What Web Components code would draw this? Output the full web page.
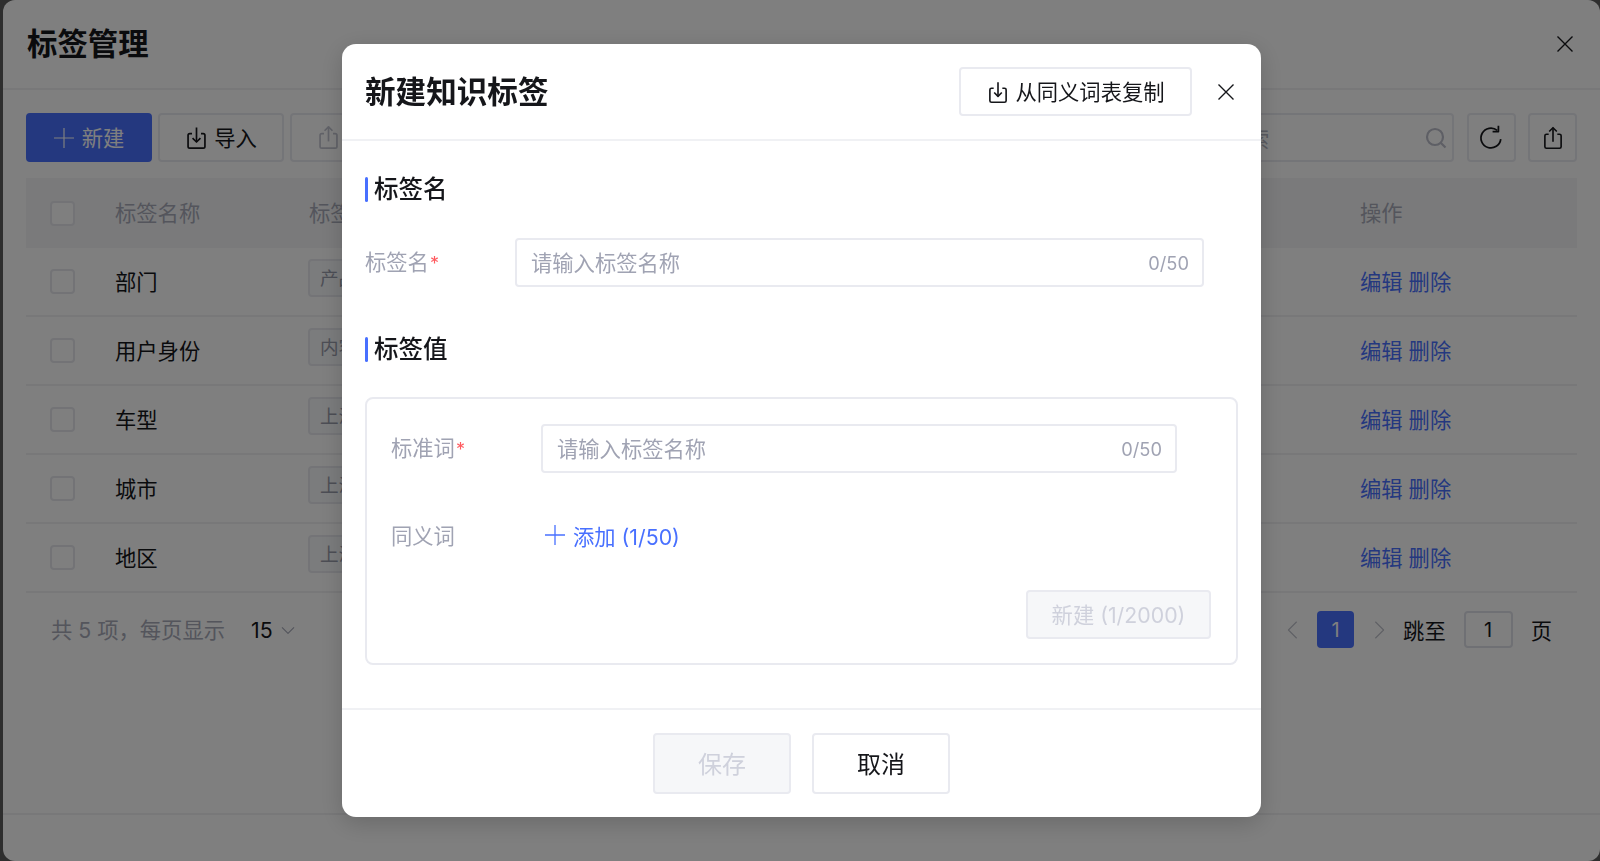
<!DOCTYPE html>
<html lang="zh-CN">
<head>
<meta charset="utf-8">
<title>标签管理</title>
<style>
  html, body { margin: 0; height: 100%; overflow: hidden; }
  body { background: #5c5c5c; font-family: Inter, "Noto Sans CJK SC", sans-serif; color: #15161a; }
</style>
</head>
<body>

<tag-drawer>
  <drawer-header slot="header" heading="标签管理"></drawer-header>
  <tag-toolbar slot="toolbar"></tag-toolbar>
  <tag-table slot="table"></tag-table>
  <tag-pager slot="pager"></tag-pager>
</tag-drawer>

<tag-modal heading="新建知识标签">
  <ui-button slot="actions" size="copy" style="padding-right:1px"><ui-icon name="import" size="26" stroke="1.500"></ui-icon>从同义词表复制</ui-button>

  <section-title>标签名</section-title>
  <form-row label="标签名" required style="margin-right:34px">
    <count-input placeholder="请输入标签名称" count="0/50"></count-input>
  </form-row>

  <section-title style="margin-top:46px">标签值</section-title>
  <value-card>
    <form-row label="标准词" required>
      <count-input placeholder="请输入标签名称" count="0/50"></count-input>
    </form-row>
    <form-row label="同义词" style="margin-top:46px">
      <add-link>添加 (1/50)</add-link>
    </form-row>
    <ui-button slot="footer" size="create" disabled>新建 (1/2000)</ui-button>
  </value-card>

  <ui-button slot="footer" size="footer" disabled>保存</ui-button>
  <ui-button slot="footer" size="footer">取消</ui-button>
</tag-modal>

<script>
// Iconos: cada uno es un conjunto de trazos en una caja de 24x24
const ICONOS = {
  plus: '<path d="M12 2v20M2 12h20"/>',
  close: '<path d="M4.5 4.5l15 15M19.5 4.5l-15 15"/>',
  import: '<path d="M8 8.5H6A1.5 1.5 0 0 0 4.5 10v10A1.5 1.5 0 0 0 6 21.5h12a1.5 1.5 0 0 0 1.5-1.5V10A1.5 1.5 0 0 0 18 8.5h-2"/><path d="M12 3v13"/><path d="M8.5 12.5L12 16l3.5-3.5"/>',
  share: '<path d="M8 8.5H6A1.5 1.5 0 0 0 4.5 10v10A1.5 1.5 0 0 0 6 21.5h12a1.5 1.5 0 0 0 1.5-1.5V10A1.5 1.5 0 0 0 18 8.5h-2"/><path d="M12 15.5V2.5"/><path d="M8.5 6L12 2.5 15.5 6"/>',
  refresh: '<path d="M19.5 13a8.5 8.5 0 1 1-3-7.5"/><path d="M17.5 1.5v5h-5"/>',
  search: '<circle cx="11" cy="11" r="8"/><path d="M17 17l4.5 4.5"/>',
  left: '<path d="M16 3L7 12l9 9"/>',
  right: '<path d="M8 3l9 9-9 9"/>',
  down: '<path d="M3 8l9 9 9-9"/>'
};

class UiIcon extends HTMLElement {
  connectedCallback() {
    const tam = this.getAttribute('size') || 20;
    const grosor = this.getAttribute('stroke') || 1.6;
    this.attachShadow({ mode: 'open' }).innerHTML = `
      <style>:host { display: inline-flex; flex: none; } svg { display: block; }</style>
      <svg width="${tam}" height="${tam}" viewBox="0 0 24 24" fill="none" stroke="currentColor"
           stroke-width="${grosor}" stroke-linejoin="round">${ICONOS[this.getAttribute('name')]}</svg>`;
  }
}
customElements.define('ui-icon', UiIcon);

class UiButton extends HTMLElement {
  constructor() {
    super();
    this.attachShadow({ mode: 'open' }).innerHTML = `
      <style>
        :host {
          display: inline-flex; align-items: center; justify-content: center; gap: 4px;
          box-sizing: border-box; height: 49px; width: 126px; padding-bottom: 2px;
          border: 2px solid #e9eaf0; border-radius: 4px; background: #fff;
          font-size: 21.3px; color: #15161a; white-space: nowrap; flex: none;
        }
        ::slotted(ui-icon) { margin-top: 2px; }
        :host([primary]) { background: #4870ff; border-color: #4870ff; color: #fff; gap: 6px; }
        :host([disabled]) { background: #f6f7f9; color: #cfd1dc; }
        :host([faded]) { background: #fff; color: #c3c5d0; }
        :host([size=square]) { width: 49px; padding-bottom: 0; }
        :host([size=square]) ::slotted(ui-icon) { margin-top: 0; }
        :host([size=copy]) { width: 233px; }
        :host([size=create]) { width: 185px; height: 49px; padding-bottom: 3px; }
        :host([size=footer]) { width: 138px; height: 61px; font-size: 24px; padding-bottom: 2px; }
      </style>
      <slot></slot>`;
  }
}
customElements.define('ui-button', UiButton);

// Cajon de fondo ----------------------------------------------------------
class TagDrawer extends HTMLElement {
  constructor() {
    super();
    this.attachShadow({ mode: 'open' }).innerHTML = `
      <style>
        :host {
          display: flex; flex-direction: column; box-sizing: border-box;
          height: 861px; margin-left: 3px; background: #fff; border-radius: 12px; overflow: hidden;
        }
        .cuerpo { flex: 1; padding: 23px 23px 0; }
        .pie { height: 46px; border-top: 2px solid #f0f0f3; }
      </style>
      <slot name="header"></slot>
      <div class="cuerpo">
        <slot name="toolbar"></slot>
        <slot name="table"></slot>
        <slot name="pager"></slot>
      </div>
      <div class="pie"></div>`;
  }
}
customElements.define('tag-drawer', TagDrawer);

class DrawerHeader extends HTMLElement {
  connectedCallback() {
    this.attachShadow({ mode: 'open' }).innerHTML = `
      <style>
        :host {
          display: flex; align-items: center; justify-content: space-between; box-sizing: border-box;
          height: 90px; padding: 0 23px 0 24px; border-bottom: 2px solid #f0f0f3;
        }
        h1 { margin: 0; font-size: 30.4px; font-weight: 600; line-height: 40px; }
      </style>
      <h1>${this.getAttribute('heading')}</h1>
      <ui-icon name="close" size="24" stroke="1.4"></ui-icon>`;
  }
}
customElements.define('drawer-header', DrawerHeader);

class TagToolbar extends HTMLElement {
  connectedCallback() {
    this.attachShadow({ mode: 'open' }).innerHTML = `
      <style>
        :host { display: flex; gap: 6px; height: 49px; }
        .hueco { flex: 1; }
        .buscar {
          flex: none; display: flex; align-items: center; justify-content: space-between;
          box-sizing: border-box; width: 371px; margin-right: 7px; height: 49px; padding: 0 4px 0 14px;
          border: 2px solid #e9eaf0; border-radius: 4px; color: #b4b6c2; font-size: 21.3px;
        }
        .buscar ui-icon { color: #bcbecb; }
        ui-button:not(.der) { padding-right: 2px; }
        ui-button + ui-button.der { margin-left: 6px; }
      </style>
      <ui-button primary><ui-icon name="plus" size="24" stroke="1.2"></ui-icon>新建</ui-button>
      <ui-button><ui-icon name="import" size="27" stroke="1.5"></ui-icon>导入</ui-button>
      <ui-button faded><ui-icon name="share" size="27" stroke="1.5"></ui-icon>导出</ui-button>
      <div class="hueco"></div>
      <div class="buscar"><span>请输入关键词搜索</span><ui-icon name="search" size="24" stroke="2.2"></ui-icon></div>
      <ui-button size="square" class="der"><ui-icon name="refresh" size="28" stroke="1.5"></ui-icon></ui-button>
      <ui-button size="square" class="der"><ui-icon name="share" size="26" stroke="1.5"></ui-icon></ui-button>`;
  }
}
customElements.define('tag-toolbar', TagToolbar);

class TagTable extends HTMLElement {
  connectedCallback() {
    const filas = [['部门', '产品'], ['用户身份', '内容'], ['车型', '上海'], ['城市', '上海'], ['地区', '上海']];
    this.attachShadow({ mode: 'open' }).innerHTML = `
      <style>
        :host { display: block; margin-top: 16px; font-size: 21.3px; }
        .fila {
          display: grid; grid-template-columns: 89px 194px 1fr 217px; align-items: center;
          height: 69px; border-bottom: 2px solid #f0f0f3; box-sizing: border-box;
        }
        .fila > span:not(.check) { padding-bottom: 2px; }
        .cabecera { height: 70px; background: #f4f5f7; border-bottom: 0; color: #a8abb9; }
        .cabecera > span:not(.check) { padding-bottom: 4px; }
        .check {
          display: block; width: 25px; height: 25px; margin-left: 24px; box-sizing: border-box;
          border: 2px solid #e6e7ec; border-radius: 4px; background: #fff;
        }
        .tag {
          display: inline-block; margin: 0 0 6px -1px; padding: 0 10px; line-height: 34px; font-size: 18.6px; color: #9a9dac;
          border: 2px solid #e8e9ef; border-radius: 4px; background: #f7f8fa;
        }
        .ops { color: #4870ff; }
      </style>
      <div class="fila cabecera">
        <span class="check"></span><span>标签名称</span><span>标签值</span><span>操作</span>
      </div>
      ${filas.map(([nombre, tag]) => `
        <div class="fila">
          <span class="check"></span><span>${nombre}</span>
          <span><span class="tag">${tag}</span></span>
          <span class="ops">编辑 删除</span>
        </div>`).join('')}`;
  }
}
customElements.define('tag-table', TagTable);

class TagPager extends HTMLElement {
  connectedCallback() {
    this.attachShadow({ mode: 'open' }).innerHTML = `
      <style>
        :host {
          display: flex; align-items: center; height: 37px; margin-top: 18px; padding: 0 25px;
          font-size: 21.3px;
        }
        .total { color: #a8abb9; padding-bottom: 2px; }
        .tam { margin-left: 26px; }
        .baja { margin-left: 7px; color: #a8abb9; }
        .der { margin-left: auto; display: flex; align-items: center; }
        .der > span { padding-bottom: 1px; }
        .pag { color: #c0c2cc; }
        .der > .actual {
          box-sizing: border-box; padding: 0; width: 37px; height: 37px; margin: 0 13.5px 0 13px; display: flex; align-items: center; justify-content: center;
          background: #4870ff; color: #fff; border-radius: 4px; font-size: 20px;
        }
        .der > .salto {
          width: 49px; height: 37px; box-sizing: border-box; padding: 0; margin: 0 18px; display: flex; align-items: center;
          justify-content: center; border: 2px solid #dfe0e8; border-radius: 4px; font-size: 20px;
        }
        .irA { margin-left: 13.5px; }
      </style>
      <span class="total">共 5 项，每页显示</span>
      <span class="tam">15</span>
      <ui-icon class="baja" name="down" size="16" stroke="1.8"></ui-icon>
      <div class="der">
        <ui-icon class="pag" name="left" size="22" stroke="1.3"></ui-icon>
        <span class="actual">1</span>
        <ui-icon class="pag" name="right" size="22" stroke="1.3"></ui-icon>
        <span class="irA">跳至</span>
        <span class="salto">1</span>
        <span>页</span>
      </div>`;
  }
}
customElements.define('tag-pager', TagPager);

// Modal -------------------------------------------------------------------
class TagModal extends HTMLElement {
  connectedCallback() {
    this.attachShadow({ mode: 'open' }).innerHTML = `
      <style>
        :host {
          position: fixed; inset: 0; display: flex; align-items: flex-start;
          padding: 44px 0 0 342px; background: rgba(0, 0, 0, .5);
        }
        .panel {
          width: 919px; height: 773px; box-sizing: border-box; display: flex; flex-direction: column;
          background: #fff; border-radius: 14px; box-shadow: 0 6px 24px rgba(0,0,0,.18);
        }
        header {
          display: flex; align-items: center; box-sizing: border-box; height: 97px; padding: 0 23px;
          border-bottom: 2px solid #f0f1f4;
        }
        h2 { margin: 0; flex: 1; font-size: 30.6px; font-weight: 600; line-height: 40px; }
        .cerrar { margin-left: 22px; }
        main { flex: 1; padding: 32px 23px 0; }
        footer {
          display: flex; justify-content: center; gap: 21px; align-items: center; height: 109px;
          box-sizing: border-box; border-top: 2px solid #f0f1f4;
        }
      </style>
      <div class="panel">
        <header>
          <h2>${this.getAttribute('heading')}</h2>
          <slot name="actions"></slot>
          <ui-icon class="cerrar" name="close" size="24" stroke="1.4"></ui-icon>
        </header>
        <main><slot></slot></main>
        <footer><slot name="footer"></slot></footer>
      </div>`;
  }
}
customElements.define('tag-modal', TagModal);

class SectionTitle extends HTMLElement {
  constructor() {
    super();
    this.attachShadow({ mode: 'open' }).innerHTML = `
      <style>
        :host {
          display: flex; align-items: center; height: 32px; font-size: 24.5px; font-weight: 500; line-height: 32px;
        }
        :host::before {
          content: ""; width: 3px; height: 25px; margin-right: 6px; background: #4870ff; border-radius: 2px;
        }
      </style>
      <slot></slot>`;
  }
}
customElements.define('section-title', SectionTitle);

class FormRow extends HTMLElement {
  connectedCallback() {
    const marca = this.hasAttribute('required') ? '<b>*</b>' : '';
    this.attachShadow({ mode: 'open' }).innerHTML = `
      <style>
        :host { display: flex; align-items: center; font-size: 21.3px; color: #a0a3b3; margin-top: 33px; }
        .rotulo { flex: none; width: 150px; line-height: 30px; }
        b { color: #ff5a5f; font-weight: 400; font-size: 18px; margin-left: 1px; }
        .campo { flex: 1; min-width: 0; }
      </style>
      <span class="rotulo">${this.getAttribute('label')}${marca}</span>
      <div class="campo"><slot></slot></div>`;
  }
}
customElements.define('form-row', FormRow);

class CountInput extends HTMLElement {
  connectedCallback() {
    this.attachShadow({ mode: 'open' }).innerHTML = `
      <style>
        :host {
          display: flex; align-items: center; justify-content: space-between; box-sizing: border-box;
          height: 49px; padding: 0 13px 2px 14px; border: 2px solid #e9eaf0; border-radius: 4px;
          color: #a0a3b3; font-size: 21.3px;
        }
        .cuenta { font-size: 18.3px; padding-top: 2px; }
      </style>
      <span>${this.getAttribute('placeholder')}</span>
      <span class="cuenta">${this.getAttribute('count')}</span>`;
  }
}
customElements.define('count-input', CountInput);

class ValueCard extends HTMLElement {
  constructor() {
    super();
    this.attachShadow({ mode: 'open' }).innerHTML = `
      <style>
        :host {
          display: block; box-sizing: border-box; width: 873px; height: 268px; margin-top: 32px;
          padding: 25px 25px 0 24px; border: 2px solid #e9eaf0; border-radius: 8px;
        }
        ::slotted(form-row) { margin-top: 0; margin-right: 34px; }
        .pie { display: flex; justify-content: flex-end; margin-top: 38px; }
      </style>
      <slot></slot>
      <div class="pie"><slot name="footer"></slot></div>`;
  }
}
customElements.define('value-card', ValueCard);

class AddLink extends HTMLElement {
  constructor() {
    super();
    this.attachShadow({ mode: 'open' }).innerHTML = `
      <style>
        :host {
          display: inline-flex; align-items: center; gap: 6px; margin: 1px 0 -1px 2px; height: 30px;
          color: #4870ff; font-size: 21.3px;
        }
      </style>
      <ui-icon name="plus" size="24" stroke="1.3"></ui-icon><slot></slot>`;
  }
}
customElements.define('add-link', AddLink);
</script>
</body>
</html>
